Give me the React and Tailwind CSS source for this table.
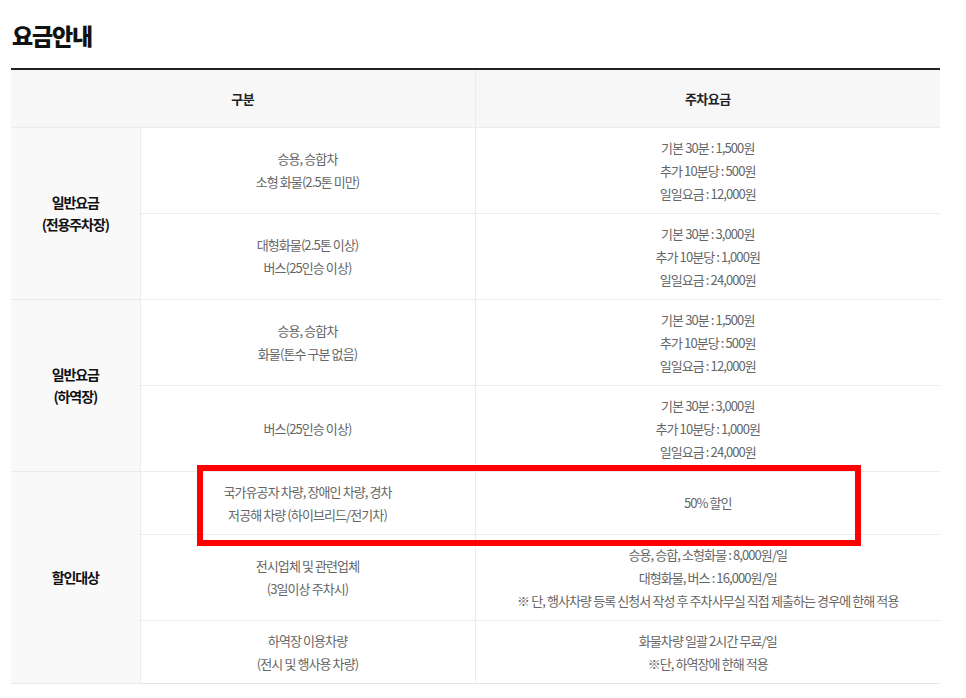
const rows = [
  {
    group: ["일반요금", "(전용주차장)"],
    span: 2,
    type: ["승용, 승합차", "소형 화물(2.5톤 미만)"],
    fee: ["기본 30분 : 1,500원", "추가 10분당 : 500원", "일일요금 : 12,000원"],
  },
  {
    type: ["대형화물(2.5톤 이상)", "버스(25인승 이상)"],
    fee: ["기본 30분 : 3,000원", "추가 10분당 : 1,000원", "일일요금 : 24,000원"],
  },
  {
    group: ["일반요금", "(하역장)"],
    span: 2,
    type: ["승용, 승합차", "화물(톤수 구분 없음)"],
    fee: ["기본 30분 : 1,500원", "추가 10분당 : 500원", "일일요금 : 12,000원"],
  },
  {
    type: ["버스(25인승 이상)"],
    fee: ["기본 30분 : 3,000원", "추가 10분당 : 1,000원", "일일요금 : 24,000원"],
  },
  {
    group: ["할인대상"],
    span: 3,
    type: ["국가유공자 차량, 장애인 차량, 경차", "저공해 차량 (하이브리드/전기차)"],
    fee: ["50% 할인"],
  },
  {
    type: ["전시업체 및 관련업체", "(3일이상 주차시)"],
    fee: [
      "승용, 승합, 소형화물 : 8,000원/일",
      "대형화물, 버스 : 16,000원/일",
      "※ 단, 행사차량 등록 신청서 작성 후 주차사무실 직접 제출하는 경우에 한해 적용",
    ],
  },
  {
    type: ["하역장 이용차량", "(전시 및 행사용 차량)"],
    fee: ["화물차량 일괄 2시간 무료/일", "※단, 하역장에 한해 적용"],
  },
]

const Lines = ({ items }) => (
  <>
    {items.map((t, i) => (
      <div key={i}>{t}</div>
    ))}
  </>
)

export default function App() {
  return (
    <div
      className="relative bg-white min-h-[698px] px-[11px] pt-[19px] text-[#666]"
      style={{ fontFamily: '"Noto Sans CJK KR", "Noto Sans", sans-serif' }}
    >
      <h1 className="text-[23px] leading-[32px] font-extrabold text-[#111] tracking-[-0.05em] pl-[1px]">요금안내</h1>

      <table className="mt-[17px] w-[929px] table-fixed border-t-2 border-[#222]">
        <colgroup>
          <col className="w-[129px]" />
          <col className="w-[335px]" />
          <col className="w-[465px]" />
        </colgroup>
        <thead>
          <tr className="h-[58px] bg-[#f7f7f7] text-[13px] font-bold text-[#222] tracking-[-0.04em]">
            <th colSpan={2} className="border-r border-[#ebebeb] font-bold">구분</th>
            <th className="font-bold">주차요금</th>
          </tr>
        </thead>
        <tbody className="text-[13px] leading-[23px] tracking-[-0.07em] text-center">
          {rows.map((r, i) => (
            <tr key={i} className="border-t border-[#ececec]">
              {r.group && (
                <td
                  rowSpan={r.span}
                  className="bg-[#f9f9f9] border-r border-[#ececec] text-[14px] leading-[22px] font-bold text-[#111] tracking-[-0.08em] border-b"
                >
                  <Lines items={r.group} />
                </td>
              )}
              <td className="py-2 border-r border-[#ececec]">
                <Lines items={r.type} />
              </td>
              <td className="py-2">
                <Lines items={r.fee} />
              </td>
            </tr>
          ))}
          <tr className="border-t border-[#e6e6e6]"></tr>
        </tbody>
      </table>

      <div className="absolute left-[197px] top-[465px] w-[664px] h-[81px] border-[6px] border-[#ff0000] pointer-events-none" />
    </div>
  )
}
